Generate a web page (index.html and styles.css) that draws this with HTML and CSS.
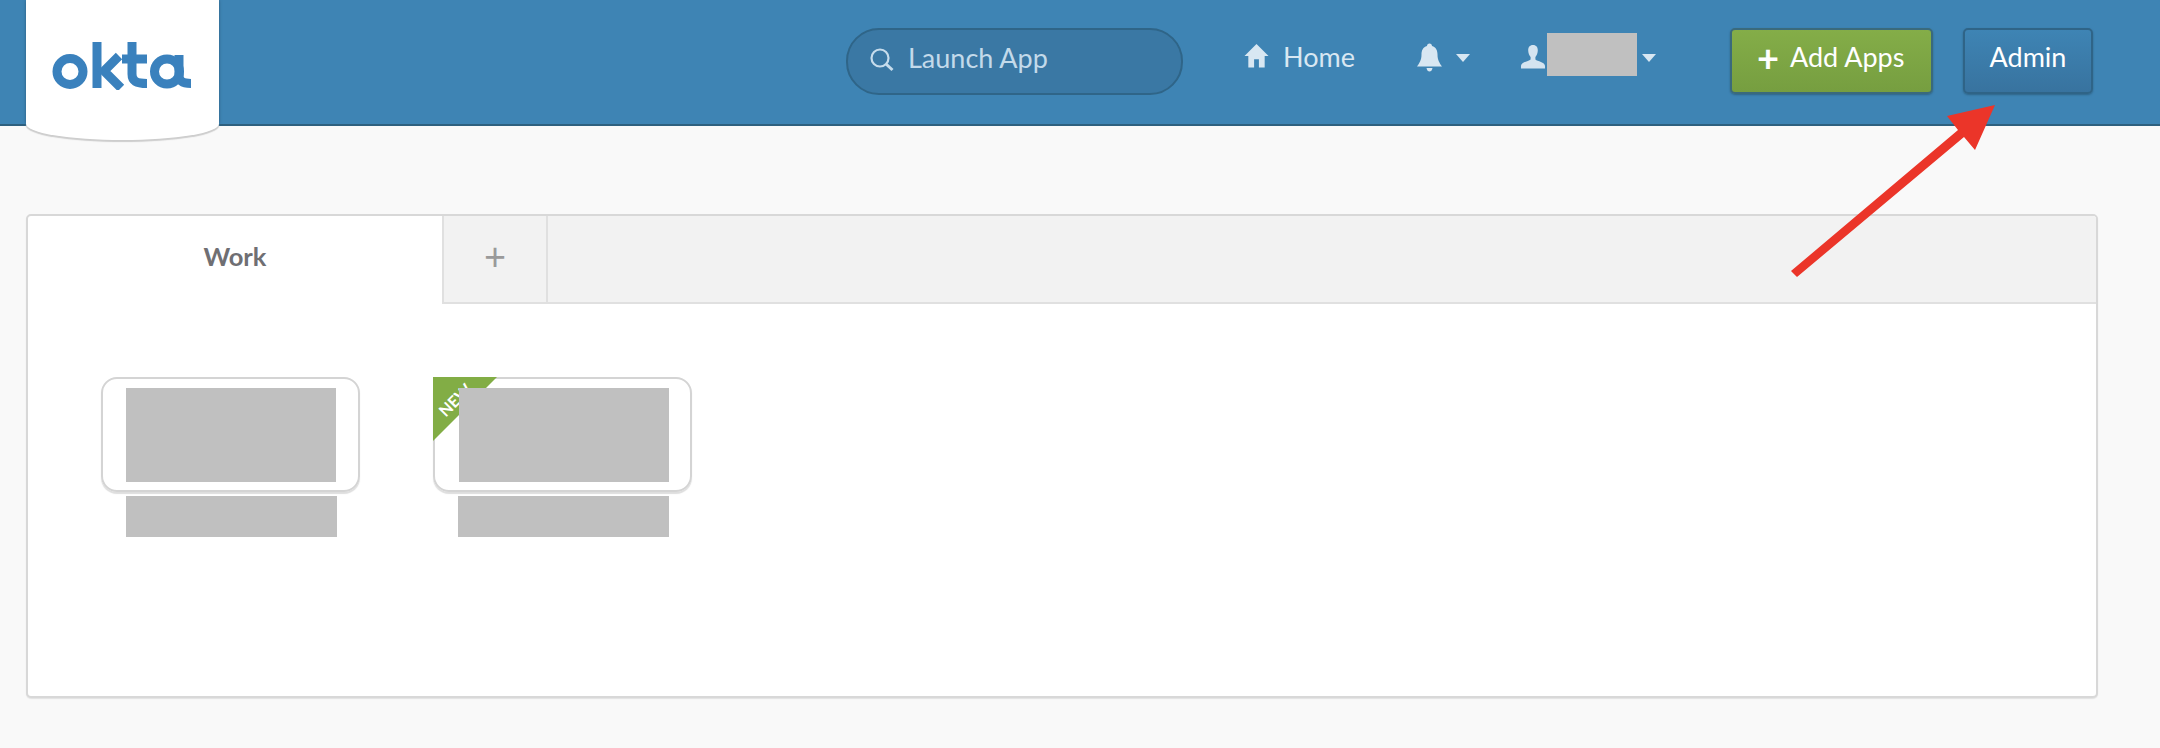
FILE: index.html
```html
<!DOCTYPE html>
<html lang="en">
<head>
<meta charset="utf-8">
<title>Okta</title>
<link rel="stylesheet" href="styles.css">
</head>
<body>
<header class="topbar">
  <div class="logo-tab">
    <svg class="logo" viewBox="0 0 140 48" width="140" height="48">
      <g fill="none" stroke="#3a81bd" stroke-width="9">
        <circle cx="18" cy="29.500" r="13"/>
        <path d="M45 0V46"/>
        <path d="M67 14L52 29L69 46"/>
        <path d="M80 0V32C80 39 84 41.500 95 41.500"/>
        <path d="M70 17H95"/>
        <circle cx="115" cy="29.500" r="12.500"/>
        <path d="M127 13V33C127 39 130 41.500 139 41.500"/>
      </g>
    </svg>
  </div>
  <nav class="nav">
    <div class="search">
      <svg class="search-icon" viewBox="0 0 26 26" width="26" height="26"><circle cx="11" cy="11" r="8.500" fill="none" stroke="#c6dcec" stroke-width="2.200"/><path d="M17 17L23.500 23" stroke="#c6dcec" stroke-width="3"/></svg>
      <span>Launch App</span>
    </div>
    <a class="nav-item home">
      <svg viewBox="0 0 26 26" width="25" height="25"><path d="M13 1L0.500 13.500H4.500V25.500H10.500V17H15.500V25.500H21.500V13.500H25.500Z" fill="#d8e7f2"/></svg>
      <span>Home</span>
    </a>
    <a class="nav-item bell">
      <svg viewBox="0 0 25 29" width="25" height="29"><path d="M12.500 0.500C14 0.500 15 1.500 15 3C19 4 20.500 7.500 20.500 11.500C20.500 17 22.500 20 25 23.500H0C2.500 20 4.500 17 4.500 11.500C4.500 7.500 6 4 10 3C10 1.500 11 0.500 12.500 0.500ZM9.500 25H15.500C15 27.500 14 28.500 12.500 28.500C11 28.500 10 27.500 9.500 25Z" fill="#d8e7f2"/></svg>
      <i class="caret"></i>
    </a>
    <a class="nav-item user">
      <svg class="user-icon" viewBox="0 0 26 26" width="26" height="25"><path d="M13 1C16.500 1 18 3.500 18 6.500C18 9.500 16.800 12 15.500 13.500V16C17.500 18 25.500 18.500 25.500 23V25.500H0.500V23C0.500 18.500 8.500 18 10.500 16V13.500C9.200 12 8 9.500 8 6.500C8 3.500 9.500 1 13 1Z" fill="#d4e4f0"/></svg>
      <div class="redact user-name"></div>
      <i class="caret"></i>
    </a>
    <a class="btn add"><span class="plus">+</span><span>Add Apps</span></a>
    <a class="btn admin">Admin</a>
  </nav>
</header>
<main class="page">
  <section class="panel">
    <div class="tabs">
      <div class="tab active">Work</div>
      <div class="tab add-tab">+</div>
      <div class="tab-fill"></div>
    </div>
    <div class="apps">
      <div class="app">
        <div class="app-card"><div class="redact thumb"></div></div>
        <div class="redact caption"></div>
      </div>
      <div class="app app-new">
        <div class="app-card">
          <div class="ribbon"><span>NEW</span></div>
          <div class="redact thumb"></div>
        </div>
        <div class="redact caption"></div>
      </div>
    </div>
  </section>
</main>
<svg class="arrow" viewBox="0 0 230 190" width="230" height="190">
  <path d="M11 175L17 181L184 41L195 54L215 9L167 20L178 34Z" fill="#eb3529"/>
</svg>
</body>
</html>
```
FILE: styles.css
```css
* { box-sizing: border-box; }
html, body { margin: 0; height: 100%; }
body {
  position: relative;
  overflow: hidden;
  background: #f9f9f9;
  font-family: "Lato", "Liberation Sans", sans-serif;
}
.topbar {
  height: 126px;
  background: #3e84b4;
  border-bottom: 2px solid #2e607f;
  display: flex;
  padding-left: 26px;
}
.logo-tab {
  position: relative;
  z-index: 2;
  width: 193px;
  height: 124px;
  background: #fff;
  box-shadow: 0 0 3px #2c5d7d;
  padding: 42px 0 0 26px;
}
.logo-tab::after {
  content: "";
  position: absolute;
  left: 0;
  right: 0;
  top: 108px;
  height: 32px;
  background: #fff;
  border-radius: 50%;
  box-shadow: 0 2px 1px #cdcdcd;
}
.logo { display: block; position: relative; z-index: 1; }
.nav {
  flex: 1;
  display: flex;
  align-items: flex-start;
  color: #d8e7f2;
  font-size: 27px;
  line-height: 27px;
}
.search {
  margin: 28px 0 0 627px;
  width: 337px;
  height: 67px;
  border: 2px solid #2f6588;
  border-radius: 33px;
  background: #3a78a4;
  display: flex;
  align-items: flex-start;
  padding: 14px 0 0 21px;
  gap: 13px;
  color: #c3daea;
}
.search-icon { margin-top: 3px; }
.nav-item { display: flex; align-items: flex-start; }
.home { margin: 43px 0 0 61px; gap: 14px; }
.bell { margin: 43px 0 0 62px; gap: 14px; }
.bell .caret { margin-top: 11px; }
.user { margin: 33px 0 0 50px; }
.user-icon { margin-top: 11px; }
.user .caret { margin-top: 21px; }
.caret {
  width: 0;
  height: 0;
  border: 7px solid transparent;
  border-top: 8px solid #d8e7f2;
  border-bottom: 0;
}
.user-name { width: 90px; height: 43px; margin: 0 5px 0 1px; }
.redact { background: #c0c0c0; }
.btn {
  height: 66px;
  border: 2px solid #2f6487;
  border-radius: 5px;
  color: #fff;
  display: flex;
  align-items: flex-start;
  padding-top: 13px;
  box-shadow: 0 1px 2px #2f6487;
  margin-top: 28px;
}
.add {
  width: 203px;
  margin-left: 74px;
  padding-left: 25px;
  background: linear-gradient(#84ad48, #769e40);
  border-color: #3a6a7c;
  gap: 11px;
}
.plus { font-size: 38px; font-weight: 700; margin-top: 1px; }
.admin {
  width: 130px;
  margin-left: 30px;
  justify-content: center;
  background: linear-gradient(#3e84b4, #38739f);
}
.page { padding: 88px 0 0 26px; }
.panel {
  width: 2072px;
  height: 484px;
  background: #fff;
  border: 2px solid #d8d8d8;
  border-radius: 5px;
  box-shadow: 0 1px 1px #e2e2e2;
  overflow: hidden;
}
.tabs { display: flex; height: 88px; }
.tab {
  display: flex;
  align-items: center;
  justify-content: center;
  height: 88px;
}
.active {
  width: 414px;
  color: #6f6f73;
  font-size: 25.500px;
  font-weight: 700;
  padding-bottom: 8px;
}
.add-tab {
  width: 106px;
  background: #f2f2f2;
  border-left: 2px solid #e0e0e0;
  border-right: 2px solid #e0e0e0;
  border-bottom: 2px solid #e0e0e0;
  color: #9a9a9a;
  font-size: 38px;
  font-weight: 400;
  padding-bottom: 9px;
}
.tab-fill {
  flex: 1;
  background: #f2f2f2;
  border-bottom: 2px solid #e0e0e0;
}
.apps {
  display: flex;
  gap: 73px;
  padding: 73px 0 0 73px;
}
.app { width: 259px; }
.app-card {
  position: relative;
  height: 115px;
  border: 2px solid #d4d4d4;
  border-radius: 16px;
  box-shadow: 0 2px 1px #dedede;
  padding: 9px 0 0 23px;
}
.thumb { width: 210px; height: 94px; position: relative; }
.app-new .thumb { margin-left: 1px; }
.caption { width: 211px; height: 41px; margin: 4px 0 0 25px; }
.ribbon {
  position: absolute;
  top: -2px;
  left: -2px;
  width: 64px;
  height: 64px;
  background: #82ad45;
  clip-path: polygon(0 0, 100% 0, 0 100%);
}
.ribbon span {
  position: absolute;
  left: 22px;
  top: 23px;
  color: #fff;
  font-size: 16px;
  font-weight: 700;
  line-height: 1;
  transform: translate(-50%, -50%) rotate(-45deg);
}
.arrow {
  position: absolute;
  left: 1780px;
  top: 96px;
  z-index: 3;
}
```
